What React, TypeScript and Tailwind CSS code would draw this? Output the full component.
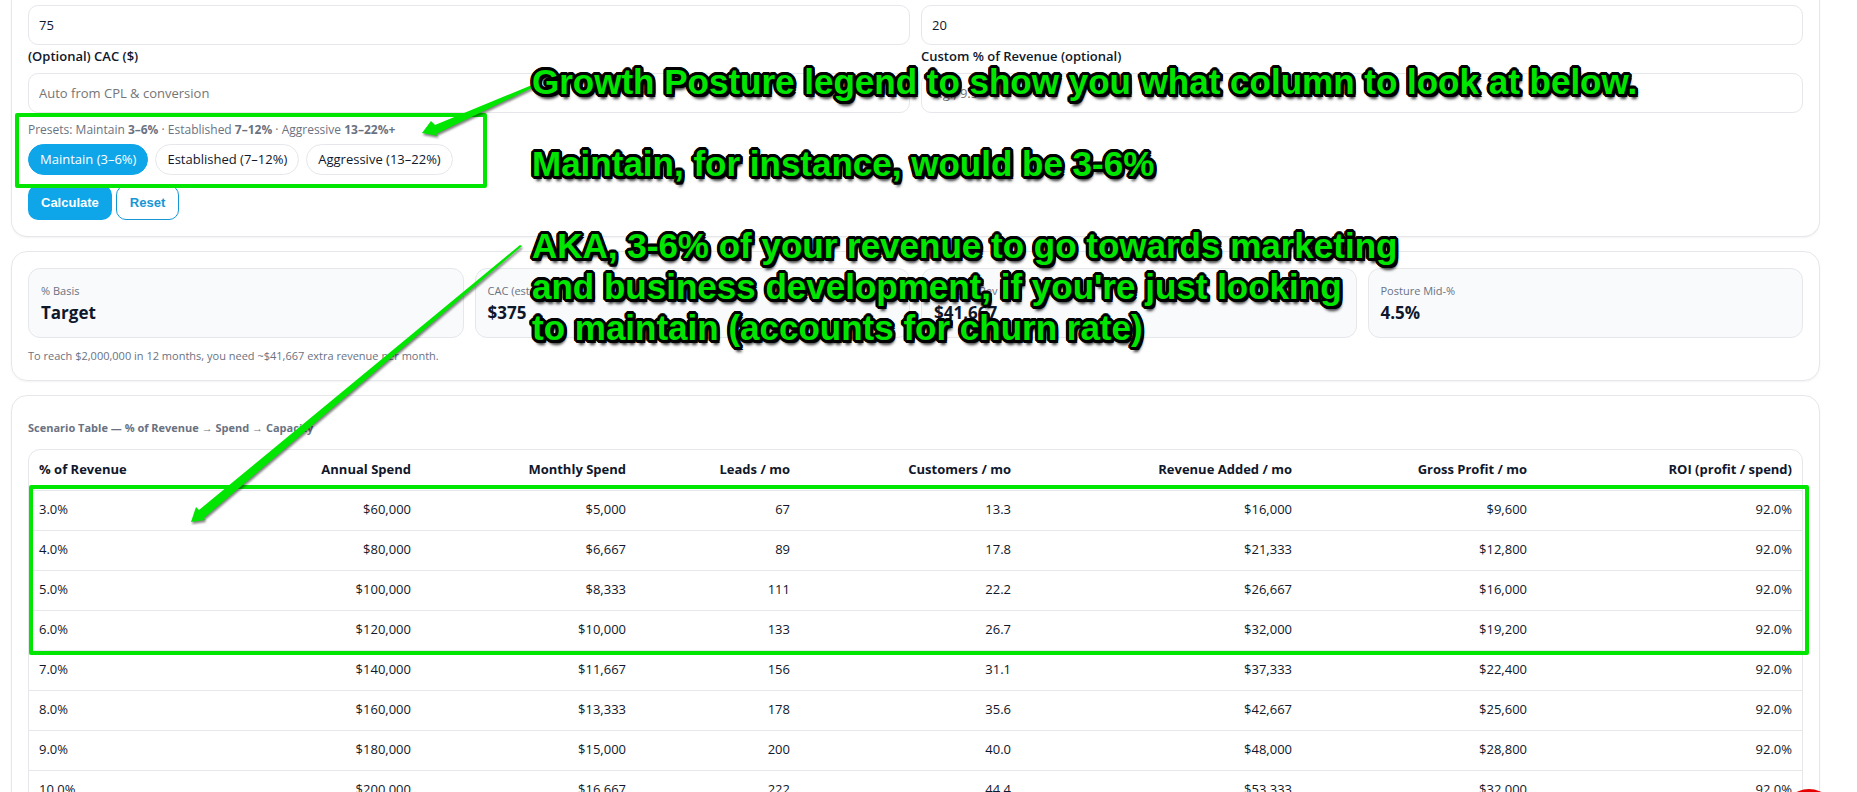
import { useState } from "react";

interface Scenario {
  pct: string;
  annual: string;
  monthly: string;
  leads: string;
  customers: string;
  revenue: string;
  profit: string;
  roi: string;
}

const presets = ["Maintain (3–6%)", "Established (7–12%)", "Aggressive (13–22%)"];

const kpis = [
  { label: "% Basis", value: "Target" },
  { label: "CAC (est.)", value: "$375" },
  { label: "Monthly Rev Gap", value: "$41,667" },
  { label: "Posture Mid-%", value: "4.5%" },
];

const columns = [
  { title: "% of Revenue", width: "w-[198px]" },
  { title: "Annual Spend", width: "w-[194px]" },
  { title: "Monthly Spend", width: "w-[215px]" },
  { title: "Leads / mo", width: "w-[164px]" },
  { title: "Customers / mo", width: "w-[221px]" },
  { title: "Revenue Added / mo", width: "w-[281px]" },
  { title: "Gross Profit / mo", width: "w-[235px]" },
  { title: "ROI (profit / spend)", width: "w-[265px]" },
];

const scenarios: Scenario[] = [
  { pct: "3.0%", annual: "$60,000", monthly: "$5,000", leads: "67", customers: "13.3", revenue: "$16,000", profit: "$9,600", roi: "92.0%" },
  { pct: "4.0%", annual: "$80,000", monthly: "$6,667", leads: "89", customers: "17.8", revenue: "$21,333", profit: "$12,800", roi: "92.0%" },
  { pct: "5.0%", annual: "$100,000", monthly: "$8,333", leads: "111", customers: "22.2", revenue: "$26,667", profit: "$16,000", roi: "92.0%" },
  { pct: "6.0%", annual: "$120,000", monthly: "$10,000", leads: "133", customers: "26.7", revenue: "$32,000", profit: "$19,200", roi: "92.0%" },
  { pct: "7.0%", annual: "$140,000", monthly: "$11,667", leads: "156", customers: "31.1", revenue: "$37,333", profit: "$22,400", roi: "92.0%" },
  { pct: "8.0%", annual: "$160,000", monthly: "$13,333", leads: "178", customers: "35.6", revenue: "$42,667", profit: "$25,600", roi: "92.0%" },
  { pct: "9.0%", annual: "$180,000", monthly: "$15,000", leads: "200", customers: "40.0", revenue: "$48,000", profit: "$28,800", roi: "92.0%" },
  { pct: "10.0%", annual: "$200,000", monthly: "$16,667", leads: "222", customers: "44.4", revenue: "$53,333", profit: "$32,000", roi: "92.0%" },
];

interface FieldProps {
  id: string;
  label: string;
  placeholder?: string;
  defaultValue?: string;
  hideLabel?: boolean;
}

function Field({ id, label, placeholder, defaultValue, hideLabel }: FieldProps) {
  return (
    <div className="flex flex-col">
      {!hideLabel && (
        <label htmlFor={id} className="flex h-7 items-center pb-1 text-[13px] font-semibold">
          {label}
        </label>
      )}
      <input
        id={id}
        type="text"
        aria-label={hideLabel ? label : undefined}
        placeholder={placeholder}
        defaultValue={defaultValue}
        className="h-10 w-full rounded-[10px] border border-gray-200 bg-white px-2.5 text-[13px] placeholder:text-[#757575]"
      />
    </div>
  );
}

function CalculatorForm() {
  const [active, setActive] = useState(presets[0]);

  return (
    <section className="rounded-b-2xl border border-t-0 border-gray-200 px-4 pt-[5px] pb-4 shadow-xs">
      <div className="grid grid-cols-2 gap-x-[11px]">
        <Field id="cpl" label="Cost per lead ($)" defaultValue="75" hideLabel />
        <Field id="conversion" label="Lead to customer (%)" defaultValue="20" hideLabel />
        <Field id="cac" label="(Optional) CAC ($)" placeholder="Auto from CPL & conversion" />
        <Field id="custom" label="Custom % of Revenue (optional)" placeholder="e.g., 9.5" />
      </div>

      <div className="relative">
        <p className="pt-[7px] text-xs leading-5 text-gray-500">
          Presets: Maintain <b>3–6%</b> · Established <b>7–12%</b> · Aggressive <b>13–22%+</b>
        </p>
        <div className="mt-1 flex gap-[7px]">
          {presets.map((preset) => (
            <button
              key={preset}
              type="button"
              onClick={() => setActive(preset)}
              className={
                preset === active
                  ? "h-[31px] rounded-full border border-[#0ea5e9] bg-[#0ea5e9] px-[11px] text-[13px] text-white"
                  : "h-[31px] rounded-full border border-gray-200 bg-white px-[11px] text-[13px]"
              }
            >
              {preset}
            </button>
          ))}
        </div>
        <div className="pointer-events-none absolute top-0 -left-[13px] h-[75px] w-[472px] rounded-xs border-4 border-[#00e600]" />
      </div>

      <div className="mt-2.5 flex gap-1">
        <button type="button" className="h-[35px] rounded-[10px] bg-[#0ea5e9] px-[13px] font-[Arial,'Liberation_Sans',sans-serif] text-[13px] font-bold text-white">
          Calculate
        </button>
        <button type="button" className="h-[35px] rounded-[10px] border border-[#1597d6] bg-white px-[13px] font-[Arial,'Liberation_Sans',sans-serif] text-[13px] font-bold text-[#1597d6]">
          Reset
        </button>
      </div>
    </section>
  );
}

function Summary() {
  return (
    <section className="rounded-2xl border border-gray-200 px-4 pt-4 pb-3.5 shadow-xs">
      <div className="grid grid-cols-4 gap-[11px]">
        {kpis.map((kpi) => (
          <div key={kpi.label} className="rounded-xl border border-gray-200 bg-[#f8fafc] p-3">
            <p className="text-[11px] leading-5 text-gray-500">{kpi.label}</p>
            <p className="text-[17px] leading-6 font-bold">{kpi.value}</p>
          </div>
        ))}
      </div>
      <p className="mt-2 text-[11px] leading-5 text-gray-500">
        To reach $2,000,000 in 12 months, you need ~$41,667 extra revenue per month.
      </p>
    </section>
  );
}

function ScenarioTable() {
  return (
    <section className="rounded-2xl border border-gray-200 p-4 shadow-xs">
      <h3 className="mt-1.5 mb-[11px] text-[11px] leading-5 font-bold text-gray-500">
        Scenario Table — % of Revenue → Spend → Capacity
      </h3>
      <div className="relative">
        <div className="overflow-hidden rounded-xl border border-gray-200">
          <table className="w-full border-collapse text-right text-[13px]">
            <thead>
              <tr className="h-10 border-b border-gray-200">
                {columns.map((column) => (
                  <th key={column.title} scope="col" className={`${column.width} px-2.5 font-bold first:text-left`}>
                    {column.title}
                  </th>
                ))}
              </tr>
            </thead>
            <tbody>
              {scenarios.map((row) => (
                <tr key={row.pct} className="h-10 border-b border-gray-200">
                  <td className="px-2.5 text-left">{row.pct}</td>
                  <td className="px-2.5">{row.annual}</td>
                  <td className="px-2.5">{row.monthly}</td>
                  <td className="px-2.5">{row.leads}</td>
                  <td className="px-2.5">{row.customers}</td>
                  <td className="px-2.5">{row.revenue}</td>
                  <td className="px-2.5">{row.profit}</td>
                  <td className="px-2.5">{row.roi}</td>
                </tr>
              ))}
            </tbody>
          </table>
        </div>
        <div className="pointer-events-none absolute top-9 -right-1.5 left-px h-[170px] rounded-xs border-4 border-[#00e600]" />
      </div>
    </section>
  );
}

function Annotations() {
  return (
    <div className="pointer-events-none absolute inset-0">
      <svg width="560" height="540" className="absolute top-0 left-0 drop-shadow-[1px_2px_1px_rgba(0,0,0,0.5)]" aria-hidden="true">
        <path d="M532 85 L532 88 L436 134 L438 136 L422 133 L431 121 L435 125 Z" fill="#00e600" />
        <path d="M520 245 L522 246 L204 518 L205 520 L191 522 L196 507 L199 510 Z" fill="#00e600" />
      </svg>
      {/* ring of hard shadows gives the letters a round black outline */}
      <div className="absolute top-[61px] left-[532px] font-[Arial,'Liberation_Sans',sans-serif] text-[35px] leading-[41px] font-bold whitespace-nowrap text-[#00e600] [text-shadow:3px_0_#000,-3px_0_#000,0_3px_#000,0_-3px_#000,3px_1px_#000,3px_-1px_#000,-3px_1px_#000,-3px_-1px_#000,1px_3px_#000,-1px_3px_#000,1px_-3px_#000,-1px_-3px_#000,3px_3px_#000,-2px_2px_#000,2px_-2px_#000,-2px_-2px_#000,2px_5px_3px_rgba(0,0,0,0.8)]">
        <p>Growth Posture legend to show you what column to look at below.</p>
        <p className="mt-[41px]">Maintain, for instance, would be 3-6%</p>
        <p className="mt-[41px]">AKA, 3-6% of your revenue to go towards marketing</p>
        <p>and business development, if you're just looking</p>
        <p>to maintain (accounts for churn rate)</p>
      </div>
    </div>
  );
}

export default function App() {
  return (
    <div className="relative h-screen overflow-hidden bg-white font-['Open_Sans','Noto_Sans',sans-serif] text-slate-900">
      <main className="flex flex-col gap-3.5 pr-[37px] pl-[11px]">
        <CalculatorForm />
        <Summary />
        <ScenarioTable />
      </main>
      <Annotations />
      <button
        type="button"
        aria-label="Open chat"
        className="absolute right-5 -bottom-[53px] size-14 rounded-full bg-[#e60000]"
      />
    </div>
  );
}
